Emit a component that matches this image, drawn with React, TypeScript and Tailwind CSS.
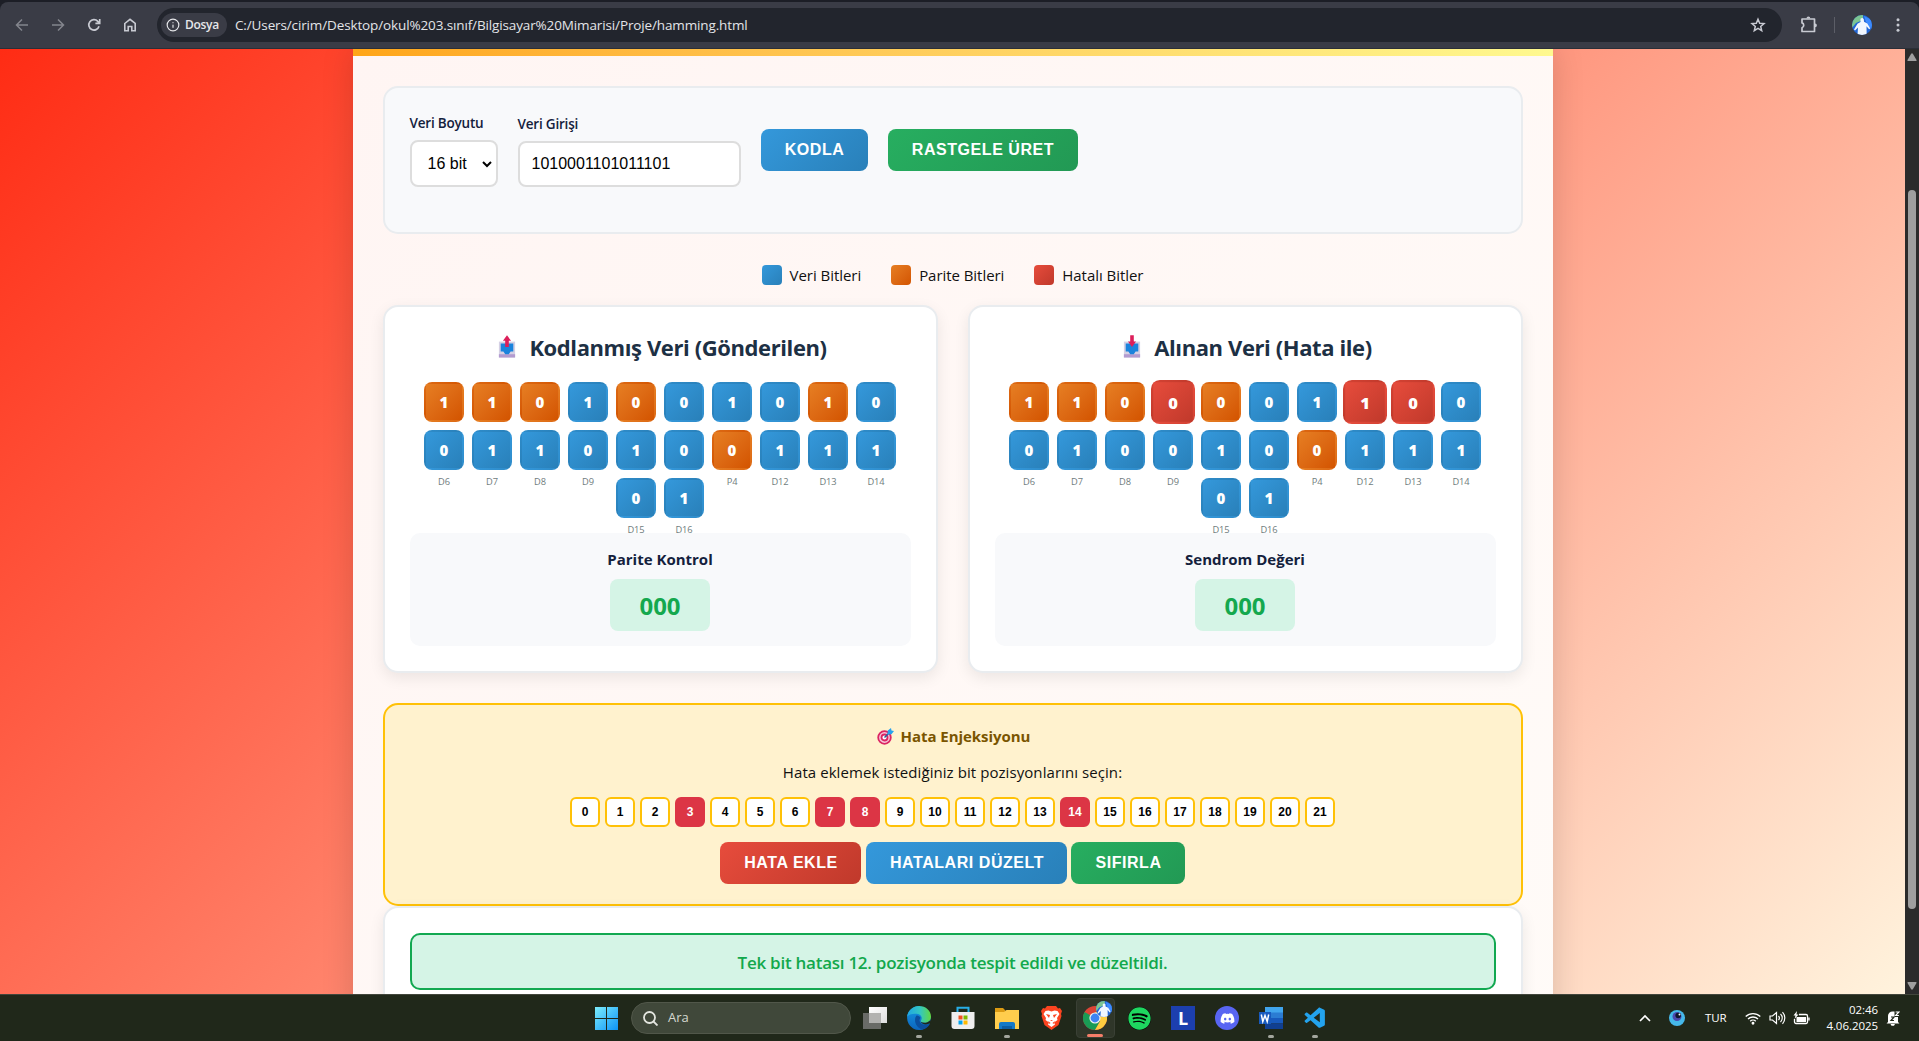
import React from 'react';
import { Info } from 'lucide-react';
import { FaDiscord, FaSpotify } from 'react-icons/fa';
import { VscVscode } from 'react-icons/vsc';

const sentBits = '1101001010'.split('').concat('0110100111'.split(''), ['0', '1']);
const receivedBits = '1100001100'.split('').concat('0100100111'.split(''), ['0', '1']);
const parityPositions = [0, 1, 2, 4, 8, 16];
const labels: Record<number, string> = {
  10: 'D6', 11: 'D7', 12: 'D8', 13: 'D9', 16: 'P4', 17: 'D12', 18: 'D13', 19: 'D14', 20: 'D15', 21: 'D16',
};
const selectedPositions = [3, 7, 8, 14];

const blue = 'bg-linear-135 from-[#3498db] to-[#2980b9]';
const orange = 'bg-linear-135 from-[#e67e22] to-[#d35400]';
const red = 'bg-linear-135 from-[#e74c3c] to-[#c0392b]';
const green = 'bg-linear-135 from-[#27ae60] to-[#229954]';

function BrowserBar() {
  return (
    <header className="h-[49px] shrink-0 bg-[#1c1e26] pt-[2px]">
      <div className="flex h-full items-center rounded-t-lg border-b border-[#2b2f38] bg-[#3a3c46] text-[#c8cad2]">
        <div className="flex w-[157px] items-center pl-[14px]">
          <svg className="h-4 w-4 text-[#83858d]" viewBox="0 0 16 16" fill="none" stroke="currentColor" strokeWidth="1.5"><path d="M14 8H2.5M8 2.5 2.5 8 8 13.5" /></svg>
          <svg className="ml-5 h-4 w-4 text-[#83858d]" viewBox="0 0 16 16" fill="none" stroke="currentColor" strokeWidth="1.5"><path d="M2 8h11.500M8 2.500 13.500 8 8 13.500" /></svg>
          <svg className="ml-5 h-4 w-4" viewBox="0 0 16 16" fill="none" stroke="currentColor" strokeWidth="1.7"><path d="M13 9.300A5.200 5.200 0 1 1 11.800 4.300L13.500 6M13.700 2v4.300H9.400" /></svg>
          <svg className="ml-5 h-4 w-4" viewBox="0 0 16 16" fill="none" stroke="currentColor" strokeWidth="1.6"><path d="M2.800 6.500 8 2.300l5.200 4.200v7.200H9.800V9.500H6.200v4.200H2.800z" /></svg>
        </div>
        <div className="flex h-[34px] w-[1625px] items-center rounded-full bg-[#22252d] pl-1">
          <div className="flex h-6 w-[66px] items-center gap-[5px] rounded-full bg-[#3a3c46] pl-[5px] text-[#e6e7ea]">
            <Info className="h-[14px] w-[14px]" strokeWidth={2} />
            <span className="text-[12px] font-semibold tracking-[-0.3px]">Dosya</span>
          </div>
          <span className="ml-[8px] text-[13.500px] tracking-[-0.13px] text-[#e3e4e8]">C:/Users/cirim/Desktop/okul%203.sınıf/Bilgisayar%20Mimarisi/Proje/hamming.html</span>
          <svg className="mr-[16px] ml-auto h-4 w-4" viewBox="0 0 16 16" fill="none" stroke="currentColor" strokeWidth="1.500"><path d="m8 2.200 1.700 4 4.300.4-3.300 2.800 1 4.200L8 11.400l-3.700 2.200 1-4.200L2 6.600l4.300-.4z" /></svg>
        </div>
        <svg className="ml-[17px] h-[20px] w-[20px]" viewBox="0 0 20 20" fill="none" stroke="currentColor" strokeWidth="1.700" strokeLinejoin="round"><path d="M3 4h12.500v12.500H3v-3.800c2.300-.6 2.300-4.200 0-4.800z" /><path d="M7.500 3.500a1.900 1.900 0 0 1 3.800 0zM16 8.400a1.900 1.900 0 0 1 0 3.800z" fill="currentColor" stroke="none" /></svg>
        <div className="ml-[15px] h-4 w-px bg-[#5c5e67]" />
        <Avatar className="ml-[17px] h-5 w-5" />
        <svg className="ml-[18px] h-4 w-4" viewBox="0 0 16 16" fill="currentColor"><circle cx="8" cy="2.700" r="1.500" /><circle cx="8" cy="8" r="1.500" /><circle cx="8" cy="13.300" r="1.500" /></svg>
      </div>
    </header>
  );
}

function Avatar({ className }: { className: string }) {
  return (
    <svg className={className} viewBox="0 0 20 20">
      <defs><clipPath id="face"><circle cx="10" cy="10" r="10" /></clipPath></defs>
      <g clipPath="url(#face)">
        <path d="M0 0h20v20H0z" fill="#2166d6" />
        <path d="M0 0h11v5L4 8l-4 5z" fill="#7cc592" />
        <path d="M12 1l8 4v9l-3-2-3-5z" fill="#3d8bff" />
        <path d="M8.500 3.800q2-1.600 3.300.4l.2 2.600 3.300 1.700 3 5-1.200.8-2.600-3 .2 8.700H5.500L6 12.500l-3 3-1-1L5.500 8.800l3-1.800z" fill="#f1f7ff" />
      </g>
    </svg>
  );
}

function Button({ tone, className, children }: { tone: string; className: string; children: React.ReactNode }) {
  return (
    <button className={`flex h-[42px] items-center justify-center rounded-lg pb-px pl-px font-['Liberation_Sans',Arial,sans-serif] text-base font-bold tracking-[0.55px] text-white ${tone} ${className}`}>
      {children}
    </button>
  );
}

function Controls() {
  return (
    <section className="flex h-[148px] items-start rounded-[15px] border-2 border-[#e9ecef] bg-[#f8f9fb] pl-[25px] text-[#14213d]">
      <div className="mt-[24px] w-[88px]">
        <label className="block h-[28px] text-[13.500px] leading-[22px] font-semibold tracking-[-0.2px]">Veri Boyutu</label>
        <div className="flex h-[47px] items-center rounded-lg border-2 border-[#dddddd] bg-white pl-4 font-['Liberation_Sans',Arial,sans-serif] text-base text-black">
          16 bit
          <svg className="ml-[15px] h-[10px] w-[10px]" viewBox="0 0 10 10" fill="none" stroke="currentColor" strokeWidth="2"><path d="m1 3 4 4 4-4" /></svg>
        </div>
      </div>
      <div className="mt-[25px] ml-[20px] w-[223px]">
        <label className="block h-[28px] text-[13.500px] leading-[22px] font-semibold tracking-[-0.2px]">Veri Girişi</label>
        <div className="flex h-[46px] items-center rounded-lg border-2 border-[#dddddd] bg-white pl-[12px] font-['Liberation_Sans',Arial,sans-serif] text-base text-black">1010001101011101</div>
      </div>
      <Button tone={blue} className="mt-[41px] ml-5 w-[107px]">KODLA</Button>
      <Button tone={green} className="mt-[41px] ml-5 w-[190px]">RASTGELE ÜRET</Button>
    </section>
  );
}

function Legend() {
  const items = [
    { text: 'Veri Bitleri', tone: blue },
    { text: 'Parite Bitleri', tone: orange },
    { text: 'Hatalı Bitler', tone: red },
  ];
  return (
    <div className="mt-[31px] flex h-5 items-center justify-center gap-[30px] text-[15px] tracking-[-0.05px] text-[#111]">
      {items.map((i) => (
        <div key={i.text} className="flex items-center gap-2">
          <span className={`h-5 w-5 rounded ${i.tone}`} />
          <span>{i.text}</span>
        </div>
      ))}
    </div>
  );
}

function TrayIcon({ up }: { up: boolean }) {
  return (
    <svg className="ml-[5px] h-[26px] w-[18px]" viewBox="0 0 20 26">
      <path d="M1 7h18v18H1z" fill="#d5d0e4" />
      <path d="M1 21h18v3.500H1z" fill="#b39bd0" />
      <path d="M3 9h14v9h-3l-2 3H8l-2-3H3z" fill="#1b83dc" />
      {up
        ? <path d="M10 0l4.500 6H12v7H8V6H5.500z" fill="#dc1f5a" />
        : <path d="M8 0h4v7h2.500L10 13 5.500 7H8z" fill="#dc1f5a" />}
    </svg>
  );
}

function Bit({ value, index, error }: { value: string; index: number; error: boolean }) {
  const tone = error ? red : parityPositions.includes(index) ? orange : blue;
  return (
    <div className="relative h-10 w-10">
      <div className={`flex h-10 w-10 items-center justify-center rounded-lg border-2 border-transparent text-[15px] leading-[22px] font-extrabold text-white ${tone} ${error ? 'scale-110' : ''}`}>{value}</div>
      <span className="absolute top-[45px] left-0 w-10 text-center text-[9.300px] leading-[14px] tracking-[-0.1px] text-[#6f7c7d]">{labels[index]}</span>
    </div>
  );
}

function DataCard({ title, up, bits, caption, errors }: { title: string; up: boolean; bits: string[]; caption: string; errors: number[] }) {
  return (
    <section className="h-[368px] w-[555px] rounded-[15px] border-2 border-[#e9ecef] bg-white px-[25px] shadow-[0_5px_15px_rgba(0,0,0,0.08)]">
      <h2 className="mt-[25px] flex h-[30px] items-center justify-center gap-[13px] text-[22px] font-bold tracking-[-0.4px] text-[#1d3044]">
        <TrayIcon up={up} />
        {title}
      </h2>
      <div className="mt-[20px] flex h-[151px] flex-wrap content-start justify-center gap-2">
        {bits.map((b, i) => <Bit key={i} value={b} index={i} error={errors.includes(i)} />)}
      </div>
      <div className="relative flex h-[113px] flex-col items-center rounded-[10px] bg-[#f8f9fb]">
        <div className="mt-[14px] h-[32px] text-[15px] leading-[24px] font-bold text-[#14213d]">{caption}</div>
        <div className="flex h-[52px] w-[100px] items-center justify-center rounded-lg bg-[#d5f4e6] pt-[1px] text-[24px] font-bold text-[#14a84e]">000</div>
      </div>
    </section>
  );
}

function TargetIcon() {
  return (
    <svg className="h-[17px] w-[17px]" viewBox="0 0 17 17" fill="none">
      <circle cx="7.500" cy="9.500" r="6.300" fill="#f7c9dc" stroke="#db2563" strokeWidth="1.800" />
      <circle cx="7.500" cy="9.500" r="3" fill="#fff" stroke="#db2563" strokeWidth="1.800" />
      <path d="M7.500 9.500 13 4" stroke="#22649c" strokeWidth="1.500" />
      <path d="m10.500 6.500.3-4L14 0l.5 2.500 2.500.5-2.500 3.200z" fill="#28a1ee" />
    </svg>
  );
}

function ErrorPanel() {
  return (
    <section className="mt-[30px] flex h-[203px] flex-col items-center rounded-[15px] border-2 border-[#ffc107] bg-[#fff2ce]">
      <h3 className="mt-[19px] ml-[2px] flex h-[24px] items-center gap-[7px] text-[15px] font-bold tracking-[-0.05px] text-[#7a5500]">
        <TargetIcon />
        Hata Enjeksiyonu
      </h3>
      <p className="mt-[12px] h-[24px] text-[15px] leading-[24px] tracking-[0.07px] text-[#111]">Hata eklemek istediğiniz bit pozisyonlarını seçin:</p>
      <div className="mt-[13px] flex gap-[5px]">
        {Array.from({ length: 22 }, (_, i) => (
          <button key={i} className={`h-[30px] w-[30px] rounded-[6px] border-2 font-['Liberation_Sans',Arial,sans-serif] text-[12px] leading-none font-bold ${selectedPositions.includes(i) ? 'border-[#dc3545] bg-[#dc3545] text-white' : 'border-[#ffc107] bg-white text-black'}`}>{i}</button>
        ))}
      </div>
      <div className="mt-[15px] flex">
        <Button tone={red} className="w-[141px]">HATA EKLE</Button>
        <Button tone={blue} className="mr-1 ml-[5px] w-[201px]">HATALARI DÜZELT</Button>
        <Button tone={green} className="w-[114px]">SIFIRLA</Button>
      </div>
    </section>
  );
}

function ScrollBar() {
  return (
    <div className="flex w-[14px] flex-col items-center bg-[#2b2b2b]">
      <svg className="mt-[4px] h-[9px] w-[10px]" viewBox="0 0 10 9"><path d="M4 1q1-1.500 2 0l3.500 6q.3 1-.8 1H1.300q-1.100 0-.8-1z" fill="#9f9f9f" /></svg>
      <div className="mt-[128px] h-[719px] w-2 rounded-full bg-[#9f9f9f]" />
      <svg className="mt-auto mb-[4px] h-[9px] w-[10px] rotate-180" viewBox="0 0 10 9"><path d="M4 1q1-1.500 2 0l3.500 6q.3 1-.8 1H1.300q-1.100 0-.8-1z" fill="#9f9f9f" /></svg>
    </div>
  );
}

function Slot({ children, dot }: { children: React.ReactNode; dot?: boolean }) {
  return (
    <div className="relative flex h-[47px] w-11 shrink-0 items-center justify-center">
      {children}
      {dot && <span className="absolute bottom-[4px] left-1/2 h-[3px] w-[6px] -translate-x-1/2 rounded-full bg-[#a3a69e]" />}
    </div>
  );
}

function Taskbar() {
  return (
    <footer className="flex h-[47px] shrink-0 items-center border-t border-[#42463c] bg-[#20281a] text-white">
      <div className="ml-[584px]"><Slot>
        <svg className="h-[23px] w-[23px]" viewBox="0 0 23 23">
          <defs><linearGradient id="win" x2="1" y2="1"><stop stopColor="#7cecfc" /><stop offset="1" stopColor="#0d93f7" /></linearGradient></defs>
          <path d="M0 0h11v11H0zM12 0h11v11H12zM0 12h11v11H0zM12 12h11v11H12z" fill="url(#win)" />
        </svg>
      </Slot></div>
      <div className="ml-[3px] flex h-8 w-[220px] shrink-0 items-center rounded-full border border-[#51574a] bg-[#40483a] pl-[11px] text-[#d5d8d0]">
        <svg className="h-[15px] w-[15px]" viewBox="0 0 15 15" fill="none" stroke="#e4e6e0" strokeWidth="1.800"><circle cx="6.500" cy="6.500" r="5.500" /><path d="m10.500 10.500 4 4" /></svg>
        <span className="ml-[10px] text-[13px]">Ara</span>
      </div>
      <div className="ml-[2px] flex">
        <Slot>
          <svg className="h-6 w-6" viewBox="0 0 24 24">
            <defs><linearGradient id="tv" x2="1" y2="1"><stop stopColor="#fff" /><stop offset="1" stopColor="#dedede" /></linearGradient></defs>
            <path d="M6 1h18v16H6z" fill="url(#tv)" /><path d="M0 7h18v16H0z" fill="#696b67" /><path d="M6 7h12v10H6z" fill="#b2b2b0" />
          </svg>
        </Slot>
        <Slot dot>
          <svg className="h-6 w-6" viewBox="0 0 24 24">
            <defs>
              <linearGradient id="ea" x2="1"><stop stopColor="#1fa5e5" /><stop offset=".55" stopColor="#34c7c0" /><stop offset="1" stopColor="#61d843" /></linearGradient>
              <linearGradient id="eb" x2="0" y2="1"><stop stopColor="#1598e4" /><stop offset="1" stopColor="#0c65bd" /></linearGradient>
            </defs>
            <path d="M12 0A12 12 0 1 0 22.500 18L24 11z" fill="url(#eb)" />
            <path d="M9.500 9.500C6.500 13 8 21 15 23.500c4-.5 6.500-3 8-6-4 2.500-10 1.500-10.500-3-.1-1 .3-2 1-2.800-1-1.500-2.500-2.500-4-2.200z" fill="#0b4f9e" />
            <path d="M0 11C1 4 6 0 12 0c7 0 12 5 12 10.500 0 4-3 6.300-6.500 6.300-3 0-4.300-1.300-3.700-2 2-2.500.7-6.800-4-7C5.500 7.500 2 8 0 11z" fill="url(#ea)" />
            <path d="M14 14.500c-.8 1 .5 2.300 3.500 2.300 2 0 4-.8 5.200-2.300l.6 2.500q-4 2.500-8 .5-2-1-1.300-3z" fill="#20281a" />
          </svg>
        </Slot>
        <Slot>
          <svg className="h-6 w-6" viewBox="0 0 24 24">
            <path d="M6.500 7V1.800h11V7" fill="none" stroke="#27aee8" strokeWidth="2" />
            <path d="M.500 6h23v14a3 3 0 0 1-3 3h-17a3 3 0 0 1-3-3z" fill="#efefef" />
            <path d="M7.500 9.500h4v4h-4z" fill="#f25022" /><path d="M12.500 9.500h4v4h-4z" fill="#7fba00" /><path d="M7.500 14.500h4v4h-4z" fill="#00a4ef" /><path d="M12.500 14.500h4v4h-4z" fill="#ffb900" />
          </svg>
        </Slot>
        <Slot dot>
          <svg className="h-6 w-6" viewBox="0 0 24 24">
            <path d="M0 2h8l3 3h-1v5H0z" fill="#dc9b13" />
            <path d="M0 6h9l2.500-2H24v19H0z" fill="#ffcd4d" />
            <path d="M4 23v-5a2 2 0 0 1 2-2h12a2 2 0 0 1 2 2v5z" fill="#1479c8" /><path d="M7 20h10v3H7z" fill="#0c5da4" />
          </svg>
        </Slot>
        <Slot>
          <svg className="h-6 w-[21px]" viewBox="0 0 21 24">
            <path d="M6 0h9l2 2.500 2-.5 2 3-1 3 .5 2-3 9L10.500 24 3.500 19l-3-9 .5-2-1-3 2-3 2 .5z" fill="#fb4420" />
            <path d="m4.500 5 3-.5 3 1 3-1 3 .5 2 3-2.500 4 .5 2-3.500 2.500 1 2-3.500 2.500L7 18.500l1-2L4.500 14l.5-2L2.500 8z" fill="#fff" />
            <path d="m5 8 4 1-1 3zm11 0-4 1 1 3zm-7 6h3l-1.500 1zm-2 1 2.500 2-1 1zm7 0-2.500 2 1 1z" fill="#fb4420" />
          </svg>
        </Slot>
        <Slot>
          <div className="relative flex h-10 w-[39px] items-center justify-center rounded border border-[#3a4035] bg-[#2f3629]">
            <svg className="h-6 w-6" viewBox="0 0 24 24">
              <circle cx="12" cy="12" r="12" fill="#db4437" />
              <path d="M1.600 6A12 12 0 0 0 12 24l5.200-9-5.200-3z" fill="#199b55" />
              <path d="M22.400 6A12 12 0 0 1 12 24l5.200-9L12 6z" fill="#ffcd40" />
              <circle cx="12" cy="12" r="5.600" fill="#f1f1f1" /><circle cx="12" cy="12" r="4.400" fill="#3f83f2" />
            </svg>
            <Avatar className="absolute top-[2px] right-[2px] h-4 w-4" />
            <span className="absolute bottom-0 left-1/2 h-[3px] w-4 -translate-x-1/2 rounded-full bg-[#f47e69]" />
          </div>
        </Slot>
        <Slot><span className="flex h-[23px] w-[23px] items-center justify-center rounded-full bg-black"><FaSpotify className="h-[23px] w-[23px] text-[#1ed760]" /></span></Slot>
        <Slot><div className="flex h-6 w-6 items-center justify-center bg-[#1c3fae] text-[18px] leading-none font-bold">L</div></Slot>
        <Slot><div className="flex h-6 w-6 items-center justify-center rounded-full bg-[#5865f2]"><FaDiscord className="h-[15px] w-[15px]" /></div></Slot>
        <Slot dot>
          <svg className="h-6 w-6" viewBox="0 0 24 24">
            <path d="M6 1h18v6H6z" fill="#41a5ee" /><path d="M6 6.500h18V12H6z" fill="#2b7cd3" /><path d="M6 12h18v5.500H6z" fill="#185abd" /><path d="M6 17.500h18V23H6z" fill="#103f91" />
            <path d="M0 6h12v12H0z" fill="#185abd" />
            <path d="m2.300 8.500 1.500 7L6 9.500l2.200 6 1.500-7" fill="none" stroke="#fff" strokeWidth="1.500" />
          </svg>
        </Slot>
        <Slot dot><VscVscode className="h-[25px] w-[25px] text-[#23a3ee]" /></Slot>
      </div>
      <div className="ml-auto flex items-center">
        <svg className="h-[8px] w-[12px]" viewBox="0 0 12 8" fill="none" stroke="currentColor" strokeWidth="1.700"><path d="m1 7 5-5 5 5" /></svg>
        <svg className="ml-[18px] h-4 w-4" viewBox="0 0 16 16"><circle cx="8" cy="8" r="8" fill="#45b8ea" /><circle cx="8" cy="6.500" r="4.500" fill="#4b48ae" /><circle cx="9.200" cy="5.500" r="2.800" fill="#10152d" /><circle cx="10.500" cy="4.500" r="1" fill="#fff" /></svg>
        <span className="ml-[20px] w-[22px] text-[11.500px] tracking-[-0.1px]">TUR</span>
        <svg className="ml-[18px] h-[14px] w-[16px]" viewBox="0 0 16 14" fill="none" stroke="currentColor" strokeWidth="1.300"><path d="M.7 5.500a10.500 10.500 0 0 1 14.600 0M3 8a7.200 7.200 0 0 1 10 0M5.200 10.300a4 4 0 0 1 5.600 0" /><circle cx="8" cy="12.300" r=".8" fill="currentColor" /></svg>
        <svg className="ml-[8px] h-[14px] w-[17px]" viewBox="0 0 17 14" fill="none" stroke="currentColor" strokeWidth="1.200"><path d="M1 5v4h2.500L7.500 12.500v-11L3.500 5zM9.500 5a3 3 0 0 1 0 4M11.500 3a5.500 5.500 0 0 1 0 8M13.500 1.200a8.500 8.500 0 0 1 0 11.600" /></svg>
        <svg className="ml-[7px] h-[14px] w-[17px]" viewBox="0 0 17 14" fill="none" stroke="currentColor" strokeWidth="1.300"><path d="M6 3.500h7a1.500 1.500 0 0 1 1.500 1.500v6a1.500 1.500 0 0 1-1.500 1.500H3A1.500 1.500 0 0 1 1.500 11V8M16 6.500v3" /><path d="M3.500 6h9.500v5H3.500z" fill="currentColor" stroke="none" /><path d="M4 0 .5 4.500h2L1.500 8 5.500 3.500h-2z" fill="currentColor" stroke="none" /></svg>
        <div className="ml-[12px] w-[56px] text-right text-[11.500px] leading-4 tracking-[-0.05px]"><div>02:46</div><div>4.06.2025</div></div>
        <svg className="mr-[19px] ml-[8px] h-[15px] w-[14px]" viewBox="0 0 14 15"><path d="M2 11V5A4.500 4.500 0 0 1 6.500.5h2V6H12v5l1.500 1.500H.5zM4.500 13H9l-1 1.700H5.500z" fill="#fff" /><path d="M9.600 1h3.300L9.600 4.500h3.300" stroke="#fff" strokeWidth="1.100" fill="none" /><path d="M5 6h3L5 9.500h3" stroke="#20281a" strokeWidth="1.200" fill="none" /></svg>
      </div>
    </footer>
  );
}

export default function App() {
  return (
    <div className="flex h-[1041px] w-[1919px] flex-col overflow-hidden font-['Open_Sans','Noto_Sans',sans-serif]">
      <BrowserBar />
      <div className="flex h-[945px] shrink-0">
        <main className="flex h-[945px] w-[1905px] justify-center overflow-hidden bg-[linear-gradient(135deg,#ff2c14_0%,#ff9a82_56%,#fff3dd_100%)]">
          <div className="h-[1100px] w-[1200px] bg-[linear-gradient(135deg,#fff5f3,#fffbf8)] shadow-[0_0_30px_rgba(0,0,0,0.15)]">
            <div className="h-[7px] bg-linear-to-r from-[#ffa516] to-[#fff98f]" />
            <div className="px-[30px] pt-[30px]">
              <Controls />
              <Legend />
              <div className="mt-5 flex gap-[30px]">
                <DataCard title="Kodlanmış Veri (Gönderilen)" up bits={sentBits} caption="Parite Kontrol" errors={[]} />
                <DataCard title="Alınan Veri (Hata ile)" up={false} bits={receivedBits} caption="Sendrom Değeri" errors={[3, 7, 8]} />
              </div>
              <ErrorPanel />
              <section className="h-[150px] rounded-[15px] border-2 border-[#e9ecef] bg-white px-[25px] pt-[25px] shadow-[0_5px_15px_rgba(0,0,0,0.08)]">
                <div className="flex h-[57px] items-center justify-center rounded-[10px] border-2 border-[#12a851] bg-[#d5f4e6] pt-[2px] text-[17px] font-semibold tracking-[-0.26px] text-[#12a84c]">Tek bit hatası 12. pozisyonda tespit edildi ve düzeltildi.</div>
              </section>
            </div>
          </div>
        </main>
        <ScrollBar />
      </div>
      <Taskbar />
    </div>
  );
}
